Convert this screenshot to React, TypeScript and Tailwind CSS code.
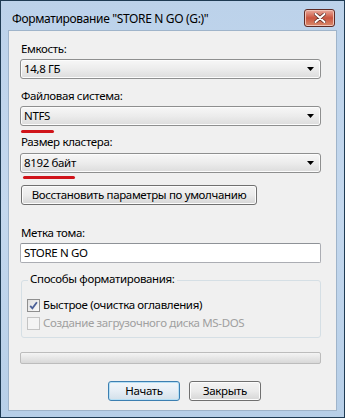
import React from 'react';

const font = { fontFamily: '"Noto Sans", "Open Sans", sans-serif' };

function Arrow() {
  return (
    <svg width="7" height="4" viewBox="0 0 7 4" className="block">
      <path d="M0 0H7L3.5 4Z" fill="#000" />
    </svg>
  );
}

function Combo({ value }: { value: string }) {
  return (
    <div className="flex h-[20px] items-center justify-between rounded-[3px] border border-[#8e8f8f] bg-gradient-to-b from-[#f7f7f7] via-[#ececec] to-[#dcdcdc] pl-[3px] pr-[6px] shadow-[inset_0_0_0_1px_#fcfcfc]">
      <span className="leading-none">{value}</span>
      <Arrow />
    </div>
  );
}

function WinButton({ children, className = '' }: { children: React.ReactNode; className?: string }) {
  return (
    <div
      className={
        'flex h-[20px] items-center justify-center whitespace-nowrap rounded-[3px] border border-[#707070] bg-gradient-to-b from-[#f3f3f3] via-[#ebebeb] to-[#d6d6d6] shadow-[inset_0_0_0_1px_#fcfcfc] ' +
        className
      }
    >
      {children}
    </div>
  );
}

export default function App() {
  return (
    <div
      style={font}
      className="flex h-[418px] w-[345px] flex-col border border-[#1f3b53] bg-gradient-to-b from-[#bcd2ea] via-[#c4d8ee] to-[#b7cfe8] text-[11.5px] tracking-[-0.35px] text-black"
    >
      {/* title bar */}
      <div className="flex h-[29px] items-start justify-between pl-[11px] pr-[9px]">
        <span className="mt-[12px] text-[12px] leading-none">Форматирование "STORE N GO (G:)"</span>
        <div className="mt-[8px] flex h-[18px] w-[31px] items-center justify-center rounded-[3px] border border-[#5e2a24] bg-gradient-to-b from-[#e9a99c] via-[#c9543f] to-[#d88a6c] shadow-[inset_0_0_0_1px_#f0c2b6]">
          <svg width="12" height="10" viewBox="0 0 12 10">
            <path d="M1.5 1L10.5 9M10.5 1L1.5 9" stroke="#5a2a24" strokeWidth="3.4" strokeLinecap="round" />
            <path d="M1.5 1L10.5 9M10.5 1L1.5 9" stroke="#fff" strokeWidth="2" strokeLinecap="round" />
          </svg>
        </div>
      </div>

      {/* client area */}
      <div className="mx-[7px] mb-[6px] flex flex-1 flex-col border border-[#9fb4ca] bg-[#f0f0f0] pl-[11px] pr-[15px]">
        <div className="mt-[11px] pl-[1px] leading-[14px]">Емкость:</div>
        <div className="mt-[3px]">
          <Combo value="14,8 ГБ" />
        </div>

        <div className="mt-[10px] pl-[1px] leading-[14px]">Файловая система:</div>
        <div className="relative mt-[3px]">
          <Combo value="NTFS" />
          <div className="absolute left-[1px] top-[24px] h-[3px] w-[33px] rounded-full bg-[#d0141a]" />
        </div>

        <div className="mt-[9px] pl-[1px] leading-[14px]">Размер кластера:</div>
        <div className="relative mt-[4px]">
          <Combo value="8192 байт" />
          <div className="absolute left-[3px] top-[23px] h-[3px] w-[52px] rounded-full bg-[#d0141a]" />
        </div>

        <WinButton className="ml-[1px] mt-[12px] w-[236px]">Восстановить параметры по умолчанию</WinButton>

        <div className="mt-[21px] pl-[1px] leading-[14px]">Метка тома:</div>
        <div className="mt-[3px] flex h-[20px] items-center rounded-[2px] border border-[#abadb3] border-t-[#8e9297] bg-white pl-[3px]">
          STORE N GO
        </div>

        {/* group box */}
        <div className="relative ml-[1px] mt-[17px] h-[58px] rounded-[3px] border border-[#d5dfe5]">
          <span className="absolute left-[6px] top-[-9px] bg-[#f0f0f0] px-[2px] leading-[14px]">
            Способы форматирования:
          </span>
          <div className="mt-[17px] flex items-center pl-[5px]">
            <div className="flex h-[13px] w-[13px] items-center justify-center border border-[#8f8f8f] bg-gradient-to-br from-[#e0e0e0] to-[#fafafa]">
              <svg width="9" height="9" viewBox="0 0 9 9">
                <path d="M1.2 4.8L3.4 7.3L7.9 1.2" fill="none" stroke="#4a5f97" strokeWidth="1.8" />
              </svg>
            </div>
            <span className="ml-[3px] leading-[14px]">Быстрое (очистка оглавления)</span>
          </div>
          <div className="mt-[4px] flex items-center pl-[5px] text-[#a0a0a0]">
            <div className="h-[13px] w-[13px] border border-[#c4c4c4] bg-[#f4f4f4]" />
            <span className="ml-[3px] leading-[14px]">Создание загрузочного диска MS-DOS</span>
          </div>
        </div>

        {/* progress */}
        <div className="mt-[14px] h-[12px] rounded-[2px] border border-[#bcbcbc] bg-gradient-to-b from-[#f4f4f4] via-[#e6e6e6] to-[#d8d8d8]" />

        <div className="ml-[88px] mt-[17px] flex gap-[9px]">
          <div className="flex h-[20px] w-[72px] items-center justify-center rounded-[3px] border border-[#3c7fb1] bg-gradient-to-b from-[#f1f6fa] via-[#e6eef5] to-[#d3e0ea] shadow-[inset_0_0_0_1px_#b6dff5]">
            Начать
          </div>
          <WinButton className="w-[72px]">Закрыть</WinButton>
        </div>
      </div>
    </div>
  );
}
